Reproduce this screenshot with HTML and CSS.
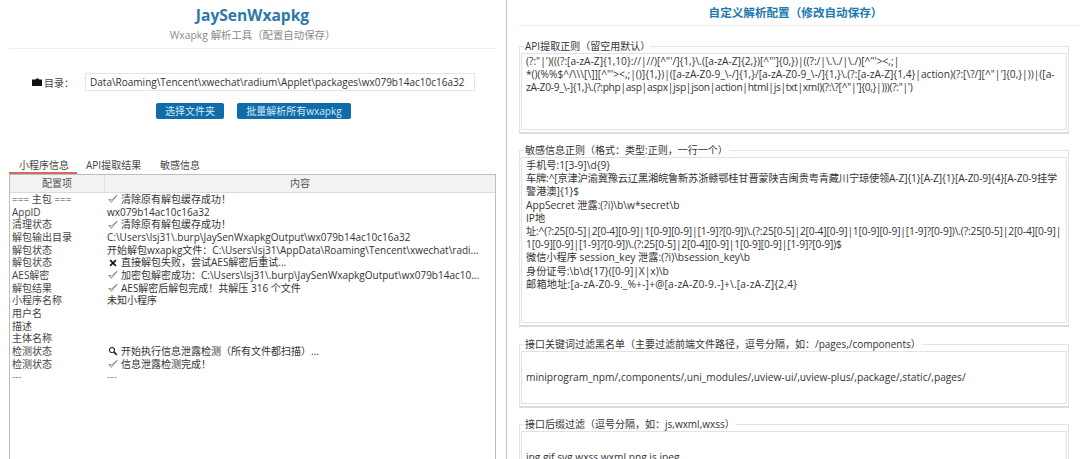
FILE: index.html
```html
<!DOCTYPE html>
<html lang="zh-CN">
<head>
<meta charset="utf-8">
<title>JaySenWxapkg</title>
<link rel="stylesheet" href="styles.css">
</head>
<body>
<main class="left">
  <header class="head">
    <h1 class="title">JaySenWxapkg</h1>
    <p class="subtitle">Wxapkg 解析工具（配置自动保存）</p>
  </header>
  <div class="dir-row">
    <svg class="folder" viewBox="0 0 10 8"><path d="M0 1.5h3.5L4.5 0.5h2L7 1.5h3V8H0z" fill="#111"/></svg>
    <span class="dir-label">目录：</span>
    <div class="dir-input">Data\Roaming\Tencent\xwechat\radium\Applet\packages\wx079b14ac10c16a32</div>
  </div>
  <div class="btn-row">
    <button class="btn btn-a">选择文件夹</button>
    <button class="btn btn-b">批量解析所有wxapkg</button>
  </div>
  <nav class="tabs">
    <span class="tab active">小程序信息</span>
    <span class="tab">API提取结果</span>
    <span class="tab">敏感信息</span>
  </nav>
  <section class="table">
    <div class="thead"><div class="th th1">配置项</div><div class="th th2">内容</div></div>
    <div class="tbody">
      <div class="row"><span class="k">=== 主包 ===</span><span class="v"><svg class="ic" viewBox="0 0 12 12"><use href="#chk"/></svg>清除原有解包缓存成功！</span></div>
      <div class="row"><span class="k">AppID</span><span class="v">wx079b14ac10c16a32</span></div>
      <div class="row"><span class="k">清理状态</span><span class="v"><svg class="ic" viewBox="0 0 12 12"><use href="#chk"/></svg>清除原有解包缓存成功！</span></div>
      <div class="row"><span class="k">解包输出目录</span><span class="v">C:\Users\lsj31\.burp\JaySenWxapkgOutput\wx079b14ac10c16a32</span></div>
      <div class="row"><span class="k">解包状态</span><span class="v">开始解包wxapkg文件：C:\Users\lsj31\AppData\Roaming\Tencent\xwechat\radi...</span></div>
      <div class="row"><span class="k">解包状态</span><span class="v"><svg class="ic" viewBox="0 0 12 12"><path d="M2.5 2.5l7 7M9.5 2.5l-7 7" stroke="#111" stroke-width="1.9" fill="none"/></svg>直接解包失败，尝试AES解密后重试...</span></div>
      <div class="row"><span class="k">AES解密</span><span class="v"><svg class="ic" viewBox="0 0 12 12"><use href="#chk"/></svg>加密包解密成功：C:\Users\lsj31\.burp\JaySenWxapkgOutput\wx079b14ac10...</span></div>
      <div class="row"><span class="k">解包结果</span><span class="v"><svg class="ic" viewBox="0 0 12 12"><use href="#chk"/></svg>AES解密后解包完成！共解压 316 个文件</span></div>
      <div class="row"><span class="k">小程序名称</span><span class="v">未知小程序</span></div>
      <div class="row"><span class="k">用户名</span><span class="v"></span></div>
      <div class="row"><span class="k">描述</span><span class="v"></span></div>
      <div class="row"><span class="k">主体名称</span><span class="v"></span></div>
      <div class="row"><span class="k">检测状态</span><span class="v"><svg class="ic" viewBox="0 0 12 12"><circle cx="4.8" cy="4.8" r="3" stroke="#222" stroke-width="1.3" fill="none"/><path d="M7 7l3.6 3.6" stroke="#222" stroke-width="1.9"/></svg>开始执行信息泄露检测（所有文件都扫描）...</span></div>
      <div class="row"><span class="k">检测状态</span><span class="v"><svg class="ic" viewBox="0 0 12 12"><use href="#chk"/></svg>信息泄露检测完成！</span></div>
      <div class="row dash"><span class="k">---</span><span class="v">---</span></div>
    </div>
  </section>
  <svg class="defs" width="0" height="0"><defs><g id="chk"><path d="M1 6.5l3 3.5 7-8.5-6.6 5.6z" fill="none" stroke="#777" stroke-width="1"/></g></defs></svg>
</main>
<aside class="right">
  <h2 class="cfg-title">自定义解析配置（修改自动保存）</h2>
  <fieldset class="fs fs1">
    <legend>API提取正则（留空用默认）</legend>
    <div class="ta">(?:"|')(((?:[a-zA-Z]{1,10}://|//)[^"'/]{1,}\.([a-zA-Z]{2,})[^"']{0,})|((?:/|\.\./|\./)[^"'&gt;&lt;,;|
*()(%%$^/\\\[\]][^"'&gt;&lt;,;|()]{1,})|([a-zA-Z0-9_\-/]{1,}/[a-zA-Z0-9_\-/]{1,}\.(?:[a-zA-Z]{1,4}|action)(?:[\?/][^"|']{0,}|))|([a-
<span class="tighter">zA-Z0-9_\-]{1,}\.(?:php|asp|aspx|jsp|json|action|html|js|txt|xml)(?:\?[^"|']{0,}|)))(?:"|')</span></div>
  </fieldset>
  <fieldset class="fs fs2">
    <legend>敏感信息正则（格式：类型:正则，一行一个）</legend>
    <div class="ta">手机号:1[3-9]\d{9}
<span class="tight">车牌:^[京津沪渝冀豫云辽黑湘皖鲁新苏浙赣鄂桂甘晋蒙陕吉闽贵粤青藏川宁琼使领A-Z]{1}[A-Z]{1}[A-Z0-9]{4}[A-Z0-9挂学</span>
警港澳]{1}$
AppSecret 泄露:(?i)\b\w*secret\b
IP地
<span class="tight">址:^(?:25[0-5]|2[0-4][0-9]|1[0-9][0-9]|[1-9]?[0-9])\.(?:25[0-5]|2[0-4][0-9]|1[0-9][0-9]|[1-9]?[0-9])\.(?:25[0-5]|2[0-4][0-9]|</span>
<span class="tight">1[0-9][0-9]|[1-9]?[0-9])\.(?:25[0-5]|2[0-4][0-9]|1[0-9][0-9]|[1-9]?[0-9])$</span>
微信小程序 session_key 泄露:(?i)\bsession_key\b
身份证号:\b\d{17}([0-9]|X|x)\b
<span class="wide">邮箱地址:[a-zA-Z0-9._%+-]+@[a-zA-Z0-9.-]+\.[a-zA-Z]{2,4}</span></div>
  </fieldset>
  <fieldset class="fs fs3">
    <legend>接口关键词过滤黑名单（主要过滤前端文件路径，逗号分隔，如：/pages,/components）</legend>
    <div class="ta ta-mid">miniprogram_npm/,components/,uni_modules/,uview-ui/,uview-plus/,package/,static/,pages/</div>
  </fieldset>
  <fieldset class="fs fs4">
    <legend>接口后缀过滤（逗号分隔，如：js,wxml,wxss）</legend>
    <div class="ta ta-mid">jpg,gif,svg,wxss,wxml,png,js,jpeg</div>
  </fieldset>
</aside>
</body>
</html>
```

FILE: styles.css
```css
* { box-sizing: border-box; }
html, body { margin: 0; height: 100%; }
body {
  width: 1080px;
  height: 459px;
  overflow: hidden;
  display: flex;
  background: #fff;
  color: #333;
  font-family: "Open Sans", "Noto Sans CJK SC", sans-serif;
  font-size: 10px;
}
.left {
  width: 507px;
  flex: none;
  padding: 0 10px 0 9px;
  border-right: 1px solid #c4c4c4;
  display: flex;
  flex-direction: column;
}
.head {
  height: 49px;
  border-bottom: 1px solid #eee;
  text-align: center;
  padding-top: 5px;
}
.title {
  margin: 0;
  font-size: 15.6px;
  line-height: 20px;
  font-weight: 700;
  color: #2b79a8;
}
.subtitle {
  margin: 2px 0 0;
  font-size: 10.4px;
  line-height: 16px;
  color: #8a8a8a;
}
.dir-row {
  margin-top: 24px;
  display: flex;
  align-items: center;
  padding-left: 23px;
  height: 18px;
}
.folder { width: 10px; height: 8px; margin-right: 2px; }
.dir-label { width: 41px; color: #444; }
.dir-input {
  width: 390px;
  height: 18px;
  padding: 0 4px;
  line-height: 17px;
  border: 1px solid #e4e4e4;
  color: #333;
  white-space: nowrap;
  overflow: hidden;
}
.btn-row {
  margin-top: 12px;
  display: flex;
  gap: 13px;
  padding-left: 147px;
}
.btn {
  height: 16px;
  padding: 0;
  border: 0;
  border-radius: 2px;
  background: #0e6cab;
  color: #d8e8f3;
  font: inherit;
  font-size: 10px;
  line-height: 16px;
}
.btn-a { width: 68px; }
.btn-b { width: 114px; }
.tabs {
  margin-top: 39px;
  height: 16px;
  display: flex;
  color: #444;
  line-height: 14px;
}
.tab { padding: 0 10px; white-space: nowrap; }
.tab.active {
  width: 68px;
  border-bottom: 2px solid #d9665f;
}
.tab:nth-child(2) { width: 74px; padding: 0 0 0 9px; }
.tab:nth-child(3) { padding-left: 9px; }
.table {
  flex: 1;
  border: 1px solid #bdbdbd;
  border-bottom: 0;
}
.thead {
  height: 18px;
  display: grid;
  grid-template-columns: 95px 1fr;
  background: #f2f2f2;
  border-bottom: 1px solid #dcdcdc;
  text-align: center;
  line-height: 17px;
  color: #555;
}
.th1 { border-right: 1px solid #e2e2e2; }
.tbody { padding-top: 0; }
.row {
  height: 12.68px;
  display: grid;
  grid-template-columns: 95px 1fr;
  line-height: 12.68px;
  white-space: nowrap;
}
.k { padding-left: 2px; color: #444; }
.v { padding-left: 2px; color: #333; display: flex; align-items: center; }
.dash .k, .dash .v { color: #888; }
.ic { width: 10px; height: 10px; margin: 0 3px 0 1px; flex: none; }
.defs { position: absolute; }
.right {
  flex: 1;
  padding: 0 0 0 12px;
  min-width: 0;
}
.cfg-title {
  margin: 0;
  height: 26px;
  border-bottom: 1px solid #eee;
  text-align: center;
  font-size: 11.6px;
  line-height: 25px;
  font-weight: 700;
  color: #2279ad;
  padding-right: 8px;
}
.fs {
  margin: 0;
  padding: 0 1px 2px;
  width: 550px;
  min-width: 0;
  border: 1px solid #e4e4e4;
  border-bottom: 2px solid #dcdcdc;
}
.fs legend {
  margin-left: 3px;
  padding: 0 1px;
  line-height: 14px;
  color: #333;
}
.ta {
  border: 1px solid #dbe3ec;
  padding: 1px 4px;
  font-size: 10.2px;
  line-height: 13.2px;
  color: #333;
  white-space: pre;
  overflow: hidden;
}
.tight { letter-spacing: -0.14px; }
.tighter { letter-spacing: -0.3px; }
.wide { letter-spacing: 0.2px; }
.fs1 { margin-top: 13px; }
.fs1 .ta { height: 77px; }
.fs2 { margin-top: 9px; }
.fs2 .ta { height: 166px; }
.fs3 { margin-top: 10px; }
.fs3 .ta { height: 53px; }
.ta-mid { padding-top: 19px; }
.fs4 { margin-top: 9px; }
.fs4 .ta { height: 53px; }
```
